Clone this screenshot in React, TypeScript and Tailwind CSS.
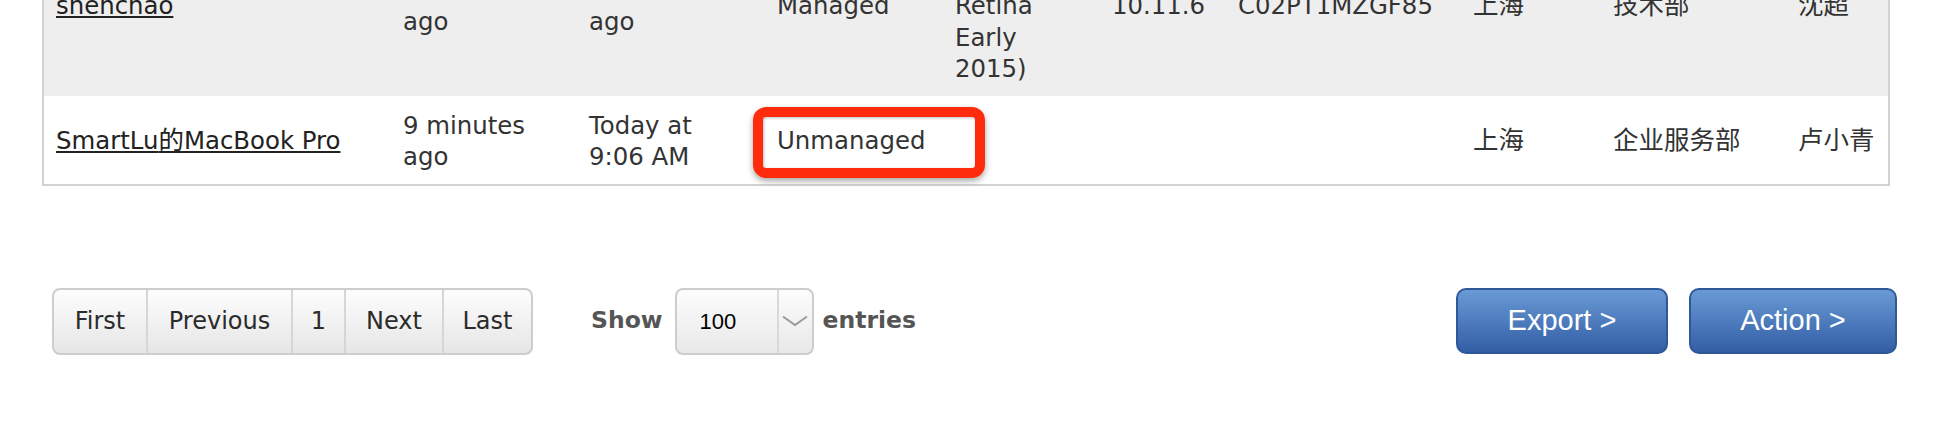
import React from 'react'

interface Computer {
  name: string
  checkIn: string
  inventory: string
  managed: string
  model: string
  os: string
  serial: string
  site: string
  dept: string
  user: string
  highlight?: boolean
}

const rows: Computer[] = [
  {
    name: 'shenchao',
    checkIn: '16 minutes ago',
    inventory: '16 minutes ago',
    managed: 'Managed',
    model: 'MacBook Pro (13″ Retina Early 2015)',
    os: '10.11.6',
    serial: 'C02PT1MZGF85',
    site: '上海',
    dept: '技术部',
    user: '沈超',
  },
  {
    name: 'SmartLu的MacBook Pro',
    checkIn: '9 minutes ago',
    inventory: 'Today at 9:06 AM',
    managed: 'Unmanaged',
    model: '',
    os: '',
    serial: '',
    site: '上海',
    dept: '企业服务部',
    user: '卢小青',
    highlight: true,
  },
]

const widths = ['w-[347px]', 'w-[186px]', 'w-[188px]', 'w-[178px]', 'w-[157px]', 'w-[126px]', 'w-[235px]', 'w-[140px]', 'w-[185px]', 'w-[102px]']

const pages = [
  { label: 'First', w: 'w-[92px]' },
  { label: 'Previous', w: 'w-[145px]' },
  { label: '1', w: 'w-[53px]' },
  { label: 'Next', w: 'w-[98px]' },
  { label: 'Last', w: 'w-[89px]' },
]

// chinese glyphs sit a bit larger than the latin ones in the original
const cjk = (text: string) =>
  text.split(/([\u4e00-\u9fff]+)/).map((part, i) =>
    /[\u4e00-\u9fff]/.test(part) ? (
      <span key={i} className="text-[25.5px]">{part}</span>
    ) : (
      part
    )
  )

const App = () => {
  return (
    <div className="w-[1940px] h-[434px] overflow-hidden bg-white text-[#333] font-['DejaVu_Sans','Noto_Sans_CJK_SC',sans-serif]">
      <div className="pl-[42px] -mt-[89px]">
        <table className="table-fixed w-[1848px] border-2 border-[#d3d3d3] border-separate border-spacing-0 text-[24.4px] leading-[31.5px]">
          <colgroup>
            {widths.map((w) => (
              <col key={w} className={w} />
            ))}
          </colgroup>
          <tbody>
            {rows.map((r, i) => {
              const cell = 'pl-3 pr-5 pt-[14px] pb-[11px] align-middle'
              return (
                <tr key={r.name} className={i === 0 ? 'h-[182px] bg-[#eeeeee]' : 'h-[88px] bg-white'}>
                  <td className={cell}>
                    <a href="#" className="text-[#222] underline underline-offset-2">{cjk(r.name)}</a>
                  </td>
                  <td className={cell}>{r.checkIn}</td>
                  <td className={cell}>{r.inventory}</td>
                  <td className={cell + ' relative'}>
                    {r.managed}
                    {r.highlight && (
                      <div className="absolute left-[-12px] top-[11px] w-[232px] h-[71px] rounded-[13px] border-[10px] border-[#fe2b0c] shadow-[0_3px_6px_rgba(0,0,0,0.35),inset_1px_1px_3px_rgba(0,0,0,0.25)]" />
                    )}
                  </td>
                  <td className={cell}>{r.model}</td>
                  <td className={cell}>{r.os}</td>
                  <td className={cell}>{r.serial}</td>
                  <td className={cell + ' whitespace-nowrap'}>{cjk(r.site)}</td>
                  <td className={cell + ' whitespace-nowrap'}>{cjk(r.dept)}</td>
                  <td className="pl-3 pt-[14px] pb-[11px] align-middle whitespace-nowrap">{cjk(r.user)}</td>
                </tr>
              )
            })}
          </tbody>
        </table>
      </div>

      <div className="mt-[102px] pl-[52px] pr-[43px] flex items-center justify-between">
        <div className="flex items-center">
          <div className="flex h-[67px] rounded-[8px] border-2 border-[#cdcdcd] bg-gradient-to-b from-[#fdfdfd] to-[#e6e6e6] text-[24px] text-[#2b2b2b] overflow-hidden">
            {pages.map((p, i) => (
              <button
                key={p.label}
                className={`${p.w} flex items-center justify-center ${i > 0 ? 'border-l-2 border-[#d6d6d6]' : ''}`}
              >
                {p.label}
              </button>
            ))}
          </div>

          <div className="ml-[58px] flex items-center gap-[12px] font-bold text-[23.5px] text-[#555]">
            <span>Show</span>
            <div className="flex h-[67px] w-[139px] rounded-[8px] border-2 border-[#cdcdcd] bg-gradient-to-b from-[#fdfdfd] to-[#e8e8e8] font-normal">
              <span className="w-[100px] pl-[23px] flex items-center text-[22px] text-black font-['Liberation_Sans',sans-serif]">100</span>
              <span className="flex-1 border-l-2 border-[#d9d9d9] flex items-center justify-center">
                <svg width="26" height="12" viewBox="0 0 26 12">
                  <path d="M1 1.5 L13 10 L25 1.5" fill="none" stroke="#9a9a9a" strokeWidth="2" />
                </svg>
              </span>
            </div>
            <span className="-ml-[3px]">entries</span>
          </div>
        </div>

        <div className="flex gap-[21px] font-['Liberation_Sans',sans-serif] text-[29px] text-white [text-shadow:2px_2px_1px_rgba(205,215,235,0.75)]">
          <button className="w-[212px] h-[66px] rounded-[10px] border-2 border-[#2f5898] bg-gradient-to-b from-[#6a9ad5] to-[#335ea5]">
            Export &gt;
          </button>
          <button className="w-[208px] h-[66px] rounded-[10px] border-2 border-[#2f5898] bg-gradient-to-b from-[#6a9ad5] to-[#335ea5]">
            Action &gt;
          </button>
        </div>
      </div>
    </div>
  )
}

export default App
